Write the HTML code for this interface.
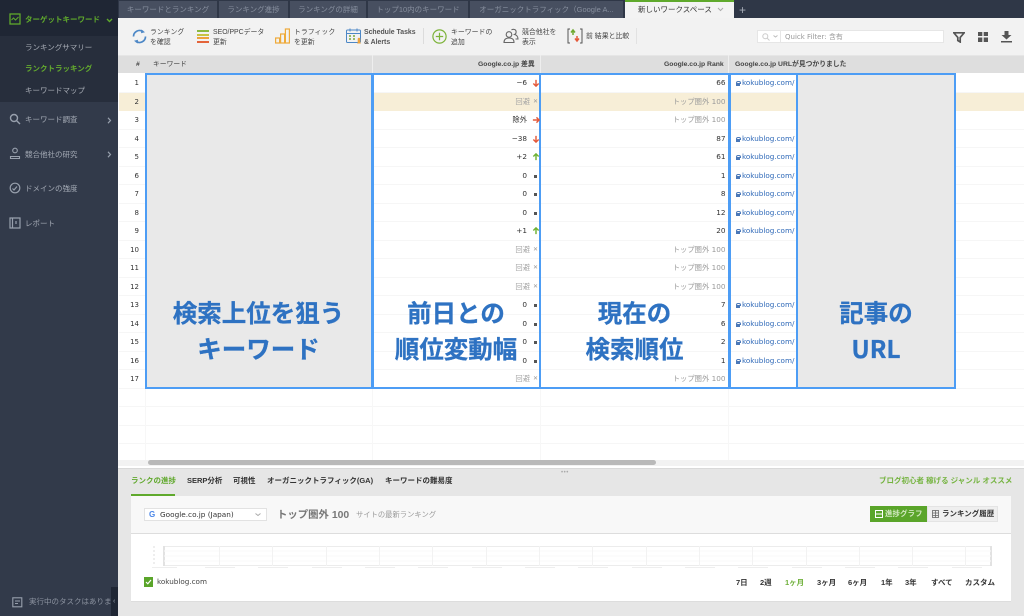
<!DOCTYPE html>
<html lang="ja"><head><meta charset="utf-8"><title>Rank Tracker</title>
<style>
*{box-sizing:border-box}
html,body{margin:0;padding:0}
body{width:1024px;height:616px;overflow:hidden;position:relative;background:#fff;font-family:"Liberation Sans","Noto Sans CJK JP",sans-serif;font-size:7.5px;color:#333}
.a{position:absolute}
.t{position:absolute;white-space:nowrap;line-height:10px}
.tab{position:absolute;top:1px;height:17px;background:#474f60;color:#878f9e;font-size:7.5px;line-height:18px;text-align:center;white-space:nowrap;overflow:hidden}
.nav{position:absolute;left:25px;font-size:7.5px;line-height:10px;color:#a3a9b4;white-space:nowrap}
.tb{position:absolute;font-size:6.9px;line-height:9.5px;color:#444;white-space:nowrap}
.h{position:absolute;top:60px;font-size:6.8px;line-height:10px;font-weight:bold;color:#444;white-space:nowrap}
.row{position:absolute;left:119px;width:905px;height:18.5px;border-bottom:1px solid #f6f6f6}
.n{position:absolute;left:119px;width:20px;text-align:right;font-family:"DejaVu Sans","Noto Sans CJK JP",sans-serif;font-size:7px;line-height:10px;color:#333}
.d{position:absolute;width:145px;text-align:right;font-family:"DejaVu Sans","Noto Sans CJK JP",sans-serif;font-size:7.3px;line-height:10px;color:#333;white-space:nowrap}
.g2{left:385px !important;color:#a5a5a5}
.m{position:absolute;left:520px;width:205.5px;text-align:right;font-family:"DejaVu Sans","Noto Sans CJK JP",sans-serif;font-size:7.3px;line-height:10px;color:#333;white-space:nowrap}
.g{color:#9a9a9a}
.x{position:absolute;left:533px;font-size:6px;line-height:10px;color:#9a9a9a}
.ar{position:absolute;left:531.5px;width:8px;height:8px;margin-top:1px}
.u{position:absolute;left:735px;padding-left:7px;font-family:"DejaVu Sans",sans-serif;font-size:7.2px;line-height:10px;color:#2f69b8;white-space:nowrap}
.u::before{content:"";position:absolute;left:.5px;top:4.500px;width:4px;height:3px;background:#4a78b8}
.u::after{content:"";position:absolute;left:1.300px;top:2.500px;width:2.400px;height:2.500px;border:.8px solid #4a78b8;border-bottom:0;border-radius:2px 2px 0 0}
.box{position:absolute;top:73px;height:316px;border:2px solid #4d9df5}
.big{position:absolute;font-size:24.5px;line-height:30px;font-weight:bold;color:#2e72c2;text-align:center;white-space:nowrap;font-family:"Noto Sans CJK JP",sans-serif;-webkit-text-stroke:.3px #2e72c2}
.bt{position:absolute;top:476px;font-size:7.5px;line-height:10px;font-weight:bold;color:#333;white-space:nowrap}
.per{position:absolute;top:578px;font-size:7.5px;line-height:10px;font-weight:bold;color:#333;white-space:nowrap}
</style></head><body>

<!-- sidebar -->
<div class="a" style="left:0;top:0;width:118px;height:616px;background:#323a4a"></div>
<div class="a" style="left:0;top:0;width:118px;height:36px;background:#1f2634"></div>
<div class="a" style="left:0;top:36px;width:118px;height:66px;background:#272e3c"></div>
<svg class="a" style="left:9px;top:13px" width="12" height="12" viewBox="0 0 12 12" fill="none" stroke="#5fa92c"><rect x="1" y="1" width="10" height="10" stroke-width="1.3"/><path d="M2.5 7l2-2 2 2 3-3" stroke-width="1"/></svg>
<div class="t" style="left:25px;top:15px;font-size:7.5px;font-weight:bold;color:#5fa92c">ターゲットキーワード</div>
<svg class="a" style="left:106px;top:18px" width="7" height="5" viewBox="0 0 7 5" fill="none" stroke="#5fa92c" stroke-width="1.4"><path d="M1 1l2.500 2.500L6 1"/></svg>
<div class="nav" style="top:43px;color:#a8adb6">ランキングサマリー</div>
<div class="nav" style="top:64px;color:#63aa2e;font-weight:bold">ランクトラッキング</div>
<div class="nav" style="top:86px;color:#a8adb6">キーワードマップ</div>
<svg class="a" style="left:9px;top:113px" width="12" height="12" viewBox="0 0 12 12" fill="none" stroke="#98a0ad" stroke-width="1.4"><circle cx="5" cy="5" r="3.500"/><path d="M7.700 7.700L11 11"/></svg>
<div class="nav" style="top:115px">キーワード調査</div>
<svg class="a" style="left:107px;top:117px" width="5" height="7" viewBox="0 0 5 7" fill="none" stroke="#98a0ad" stroke-width="1.200"><path d="M1 .8l2.500 2.700L1 6.200"/></svg>
<svg class="a" style="left:9px;top:147px" width="12" height="13" viewBox="0 0 12 13" fill="none" stroke="#98a0ad" stroke-width="1.100"><circle cx="6" cy="3.500" r="2.300"/><path d="M1.500 11.500V9.500h9v2z"/></svg>
<div class="nav" style="top:150px">競合他社の研究</div>
<svg class="a" style="left:107px;top:151px" width="5" height="7" viewBox="0 0 5 7" fill="none" stroke="#98a0ad" stroke-width="1.200"><path d="M1 .8l2.500 2.700L1 6.200"/></svg>
<svg class="a" style="left:9px;top:182px" width="12" height="12" viewBox="0 0 12 12" fill="none" stroke="#98a0ad" stroke-width="1.200"><circle cx="6" cy="6" r="4.800"/><path d="M3.500 6.500L5 8l3-3.500"/></svg>
<div class="nav" style="top:184px">ドメインの強度</div>
<svg class="a" style="left:9px;top:217px" width="12" height="12" viewBox="0 0 12 12" fill="none" stroke="#98a0ad" stroke-width="1.200"><path d="M1 1h2.500v10H1zM3.500 1H11v10H3.500z"/><path d="M7 4v3"/></svg>
<div class="nav" style="top:219px">レポート</div>
<svg class="a" style="left:12px;top:597px" width="11" height="11" viewBox="0 0 11 11" fill="none" stroke="#98a0ad" stroke-width="1.100"><rect x=".8" y=".8" width="9" height="9"/><path d="M3 4h5M3 6.500h3"/></svg>
<div class="t" style="left:29px;top:597px;width:82px;overflow:hidden;font-size:7.500px;color:#8d94a1">実行中のタスクはありません</div>
<div class="a" style="left:111px;top:587px;width:7px;height:29px;background:#1f2634"></div>
<div class="t" style="left:113px;top:597px;font-size:7px;color:#98a0ad">‹</div>

<!-- tabs -->
<div class="a" style="left:118px;top:0;width:906px;height:18px;background:#2f3747"></div>
<div class="tab" style="left:119px;width:98px">キーワードとランキング</div>
<div class="tab" style="left:219px;width:69px">ランキング進捗</div>
<div class="tab" style="left:290px;width:76px">ランキングの詳細</div>
<div class="tab" style="left:368px;width:100px">トップ10内のキーワード</div>
<div class="tab" style="left:470px;width:153px">オーガニックトラフィック（Google A...</div>
<div class="a" style="left:625px;top:0;width:109px;height:18px;background:#f3f3f3;border-top:2px solid #5fa92c"></div>
<div class="t" style="left:638px;top:5px;font-size:7.500px;color:#333">新しいワークスペース</div>
<svg class="a" style="left:717px;top:7px" width="7" height="5" viewBox="0 0 7 5" fill="none" stroke="#aaa"><path d="M1 1l2.500 2.500L6 1"/></svg>
<div class="t" style="left:739px;top:5px;font-size:12px;color:#a5abb6">+</div>

<!-- toolbar -->
<div class="a" style="left:118px;top:18px;width:906px;height:37px;background:#f2f2f2"></div>
<svg class="a" style="left:132px;top:29px" width="15" height="15" viewBox="0 0 15 15" fill="none" stroke="#4c87c6" stroke-width="1.700"><path d="M1.500 7.500A6 6 0 0 1 10.800 2.500"/><path d="M13.500 7.500A6 6 0 0 1 4.200 12.500"/><path d="M9.500 .5l3.500 2.800-4 1z" fill="#4c87c6" stroke="none"/><path d="M5.500 14.500L2 11.700l4-1z" fill="#4c87c6" stroke="none"/></svg>
<div class="tb" style="left:150px;top:28px">ランキング<br>を確認</div>
<div class="a" style="left:197px;top:30px;width:12px;height:2px;background:#8ab83f"></div>
<div class="a" style="left:197px;top:33.500px;width:12px;height:2px;background:#c6c342"></div>
<div class="a" style="left:197px;top:37px;width:12px;height:2px;background:#eda23c"></div>
<div class="a" style="left:197px;top:40.500px;width:12px;height:2px;background:#e4643a"></div>
<div class="tb" style="left:213px;top:28px">SEO/PPCデータ<br>更新</div>
<svg class="a" style="left:275px;top:28px" width="15" height="16" viewBox="0 0 15 16" fill="none" stroke="#eeaa3a" stroke-width="1.200"><rect x=".6" y="10" width="4" height="5"/><rect x="5.600" y="6" width="4" height="9"/><rect x="10.400" y="1" width="4" height="14"/></svg>
<div class="tb" style="left:294px;top:28px">トラフィック<br>を更新</div>
<svg class="a" style="left:346px;top:28px" width="16" height="16" viewBox="0 0 16 16" fill="none" stroke="#4c87c6" stroke-width="1"><rect x=".5" y="2" width="14" height="12.500" rx="1"/><path d="M.5 5.500h14M4 .5v3M11 .5v3"/><path d="M3 8h2M7 8h2M3 11h2M7 11h2" stroke="#79a83c" stroke-width="1.500"/><path d="M11 15.500h4l-.7-1V11a1.300 1.300 0 0 0-2.600 0v3.500z" fill="#eda23c" stroke="none"/></svg>
<div class="tb" style="left:364px;top:28px;font-weight:bold;color:#555">Schedule Tasks<br>&amp; Alerts</div>
<div class="a" style="left:423px;top:28px;width:1px;height:16px;background:#dcdcdc"></div>
<svg class="a" style="left:432px;top:29px" width="15" height="15" viewBox="0 0 15 15" fill="none" stroke="#7db33a" stroke-width="1.200"><circle cx="7.500" cy="7.500" r="6.600"/><path d="M7.500 3.800v7.400M3.800 7.500h7.400"/></svg>
<div class="tb" style="left:451px;top:28px">キーワードの<br>追加</div>
<svg class="a" style="left:503px;top:28px" width="16" height="16" viewBox="0 0 16 16" fill="none" stroke="#666" stroke-width="1.100"><circle cx="6" cy="6.500" r="2.800"/><path d="M1 14.500c0-3.500 2-4.500 5-4.500s5 1 5 4.500z"/><path d="M8.500 2c1-1 4-1 4.500 1s-.5 3-1.500 3.500c2 .5 3.500 2 3.500 4.500h-2.500"/></svg>
<div class="tb" style="left:522px;top:28px">競合他社を<br>表示</div>
<svg class="a" style="left:567px;top:28px" width="16" height="16" viewBox="0 0 16 16" fill="none"><path d="M3 1H1v14h2M13 1h2v14h-2" stroke="#555" stroke-width="1"/><path d="M6 7V3M4 4.500L6 2l2 2.500" stroke="#6fa932" stroke-width="1.500"/><path d="M10 8v4.500M8 10.500l2 2.500 2-2.500" stroke="#e4593a" stroke-width="1.500"/></svg>
<div class="tb" style="left:586px;top:32px">前 結果と比較</div>
<div class="a" style="left:636px;top:28px;width:1px;height:16px;background:#e2e2e2"></div>
<div class="a" style="left:757px;top:30px;width:187px;height:13px;background:#fff;border:1px solid #e6e6e6"></div>
<svg class="a" style="left:762px;top:33px" width="8" height="8" viewBox="0 0 8 8" fill="none" stroke="#ccc"><circle cx="3.300" cy="3.300" r="2.500"/><path d="M5 5l2.500 2.500"/></svg>
<svg class="a" style="left:773px;top:35px" width="5" height="3" viewBox="0 0 5 3" fill="none" stroke="#bbb"><path d="M.5.500l2 1.500 2-1.500"/></svg>
<div class="a" style="left:780px;top:30px;width:1px;height:13px;background:#e6e6e6"></div>
<div class="t" style="left:785px;top:32px;font-family:'DejaVu Sans','Noto Sans CJK JP',sans-serif;font-size:7px;color:#999">Quick Filter: 含有</div>
<svg class="a" style="left:953px;top:32px" width="12" height="11" viewBox="0 0 12 11"><path d="M.8.800h10.400L7.200 5.500V10L4.800 8.500V5.500z" fill="none" stroke="#555" stroke-width="1.700"/></svg>
<svg class="a" style="left:978px;top:32px" width="10" height="10" viewBox="0 0 10 10" fill="#555"><rect width="4.300" height="4"/><rect x="5.700" width="4.300" height="4"/><rect y="5.500" width="4.300" height="4.500"/><rect x="5.700" y="5.500" width="4.300" height="4.500"/></svg>
<svg class="a" style="left:1001px;top:31px" width="11" height="12" viewBox="0 0 11 12" fill="#555"><path d="M3.500 0h4v4h3L5.500 8.500.500 4h3z"/><rect y="10" width="11" height="1.500"/></svg>

<!-- table -->
<div class="a" style="left:118px;top:55px;width:906px;height:18px;background:#dedede;border-top:1px solid #e6e6e6"></div>
<div class="a" style="left:372px;top:55px;width:1px;height:18px;background:#eee"></div>
<div class="a" style="left:540px;top:55px;width:1px;height:18px;background:#eee"></div>
<div class="a" style="left:728px;top:55px;width:1px;height:18px;background:#eee"></div>
<div class="h" style="left:136px">#</div>
<div class="h" style="left:153px;font-weight:normal">キーワード</div>
<div class="h" style="left:478px">Google.co.jp 差異</div>
<div class="h" style="left:664px">Google.co.jp Rank</div>
<div class="h" style="left:735px">Google.co.jp URLが見つかりました</div>

<div class="row" style="top:74px"></div>
<div class="row" style="top:92.500px;background:#f7eed7;border:0"></div>
<div class="row" style="top:111px"></div>
<div class="row" style="top:129.500px"></div>
<div class="row" style="top:148px"></div>
<div class="row" style="top:166.500px"></div>
<div class="row" style="top:185px"></div>
<div class="row" style="top:203.500px"></div>
<div class="row" style="top:222px"></div>
<div class="row" style="top:240.500px"></div>
<div class="row" style="top:259px"></div>
<div class="row" style="top:277.500px"></div>
<div class="row" style="top:296px"></div>
<div class="row" style="top:314.500px"></div>
<div class="row" style="top:333px"></div>
<div class="row" style="top:351.500px"></div>
<div class="row" style="top:370px"></div>
<div class="row" style="top:388.500px"></div>
<div class="row" style="top:407px"></div>
<div class="row" style="top:425.500px"></div>
<div class="row" style="top:444px;border:0"></div>
<div class="a" style="left:145px;top:389px;width:1px;height:71px;background:#f7f7f7"></div>
<div class="a" style="left:372px;top:389px;width:1px;height:71px;background:#f7f7f7"></div>
<div class="a" style="left:540px;top:389px;width:1px;height:71px;background:#f7f7f7"></div>
<div class="a" style="left:728px;top:389px;width:1px;height:71px;background:#f7f7f7"></div>

<div class="n" style="top:78px">1</div><div class="n" style="top:97px">2</div><div class="n" style="top:115px">3</div><div class="n" style="top:134px">4</div><div class="n" style="top:152px">5</div><div class="n" style="top:171px">6</div><div class="n" style="top:189px">7</div><div class="n" style="top:208px">8</div><div class="n" style="top:226px">9</div><div class="n" style="top:245px">10</div><div class="n" style="top:263px">11</div><div class="n" style="top:282px">12</div><div class="n" style="top:300px">13</div><div class="n" style="top:319px">14</div><div class="n" style="top:337px">15</div><div class="n" style="top:356px">16</div><div class="n" style="top:374px">17</div>

<!-- boxes -->
<div class="box" style="left:145px;width:228px;background:#e9e9e9"></div>
<div class="box" style="left:372px;width:169px"></div>
<div class="box" style="left:539px;width:191px"></div>
<div class="box" style="left:729px;width:69px"></div>
<div class="box" style="left:796px;width:160px;background:#e9e9e9"></div>

<!-- diff -->
<div class="d" style="top:78px;left:382px">−6</div>
<svg class="ar" style="top:78px" viewBox="0 0 9 9" fill="none" stroke="#e4593a" stroke-width="1.600"><path d="M4.500 1v7M1.500 5l3 3 3-3"/></svg>
<div class="d g2" style="top:97px">回避</div><div class="x" style="top:97px">✕</div>
<div class="d" style="top:115px;left:382px">除外</div>
<svg class="ar" style="top:115px" viewBox="0 0 9 9" fill="none" stroke="#e4593a" stroke-width="1.600"><path d="M1 4.500h7M5 1.500l3 3-3 3"/></svg>
<div class="d" style="top:134px;left:382px">−38</div>
<svg class="ar" style="top:134px" viewBox="0 0 9 9" fill="none" stroke="#e4593a" stroke-width="1.600"><path d="M4.500 1v7M1.500 5l3 3 3-3"/></svg>
<div class="d" style="top:152px;left:382px">+2</div>
<svg class="ar" style="top:152px" viewBox="0 0 9 9" fill="none" stroke="#6fb132" stroke-width="1.600"><path d="M4.500 8V1M1.500 4l3-3 3 3"/></svg>
<div class="d" style="top:171px;left:382px">0</div><div class="a" style="left:534px;top:174.500px;width:3px;height:3px;background:#555"></div>
<div class="d" style="top:189px;left:382px">0</div><div class="a" style="left:534px;top:192.500px;width:3px;height:3px;background:#555"></div>
<div class="d" style="top:208px;left:382px">0</div><div class="a" style="left:534px;top:211.500px;width:3px;height:3px;background:#555"></div>
<div class="d" style="top:226px;left:382px">+1</div>
<svg class="ar" style="top:226px" viewBox="0 0 9 9" fill="none" stroke="#6fb132" stroke-width="1.600"><path d="M4.500 8V1M1.500 4l3-3 3 3"/></svg>
<div class="d g2" style="top:245px">回避</div><div class="x" style="top:245px">✕</div>
<div class="d g2" style="top:263px">回避</div><div class="x" style="top:263px">✕</div>
<div class="d g2" style="top:282px">回避</div><div class="x" style="top:282px">✕</div>
<div class="d" style="top:300px;left:382px">0</div><div class="a" style="left:534px;top:303.500px;width:3px;height:3px;background:#555"></div>
<div class="d" style="top:319px;left:382px">0</div><div class="a" style="left:534px;top:322.500px;width:3px;height:3px;background:#555"></div>
<div class="d" style="top:337px;left:382px">0</div><div class="a" style="left:534px;top:340.500px;width:3px;height:3px;background:#555"></div>
<div class="d" style="top:356px;left:382px">0</div><div class="a" style="left:534px;top:359.500px;width:3px;height:3px;background:#555"></div>
<div class="d g2" style="top:374px">回避</div><div class="x" style="top:374px">✕</div>

<!-- rank -->
<div class="m" style="top:78px">66</div>
<div class="m g" style="top:97px">トップ圏外 100</div>
<div class="m g" style="top:115px">トップ圏外 100</div>
<div class="m" style="top:134px">87</div>
<div class="m" style="top:152px">61</div>
<div class="m" style="top:171px">1</div>
<div class="m" style="top:189px">8</div>
<div class="m" style="top:208px">12</div>
<div class="m" style="top:226px">20</div>
<div class="m g" style="top:245px">トップ圏外 100</div>
<div class="m g" style="top:263px">トップ圏外 100</div>
<div class="m g" style="top:282px">トップ圏外 100</div>
<div class="m" style="top:300px">7</div>
<div class="m" style="top:319px">6</div>
<div class="m" style="top:337px">2</div>
<div class="m" style="top:356px">1</div>
<div class="m g" style="top:374px">トップ圏外 100</div>

<!-- url -->
<div class="u" style="top:78px">kokublog.com/</div>
<div class="u" style="top:134px">kokublog.com/</div>
<div class="u" style="top:152px">kokublog.com/</div>
<div class="u" style="top:171px">kokublog.com/</div>
<div class="u" style="top:189px">kokublog.com/</div>
<div class="u" style="top:208px">kokublog.com/</div>
<div class="u" style="top:226px">kokublog.com/</div>
<div class="u" style="top:300px">kokublog.com/</div>
<div class="u" style="top:319px">kokublog.com/</div>
<div class="u" style="top:337px">kokublog.com/</div>
<div class="u" style="top:356px">kokublog.com/</div>

<!-- annotations -->
<div class="big" style="left:145px;width:227px;top:298px">検索上位を狙う</div>
<div class="big" style="left:145px;width:227px;top:334px">キーワード</div>
<div class="big" style="left:372px;width:168px;top:298px">前日との</div>
<div class="big" style="left:372px;width:168px;top:334px">順位変動幅</div>
<div class="big" style="left:540px;width:189px;top:298px">現在の</div>
<div class="big" style="left:540px;width:189px;top:334px">検索順位</div>
<div class="big" style="left:796px;width:160px;top:298px">記事の</div>
<div class="big" style="left:796px;width:160px;top:334px">URL</div>

<!-- scrollbar -->
<div class="a" style="left:118px;top:460px;width:906px;height:6px;background:#f2f2f2"></div>
<div class="a" style="left:148px;top:460px;width:508px;height:5px;background:#b9b9b9;border-radius:3px"></div>
<div class="a" style="left:118px;top:466px;width:906px;height:2px;background:#fff"></div>

<!-- bottom panel -->
<div class="a" style="left:118px;top:468px;width:906px;height:148px;background:#e6e6e6;border-top:1px solid #d9d9d9"></div>
<div class="t" style="left:561px;top:468px;font-size:6px;color:#aaa;letter-spacing:.5px">•••</div>
<div class="bt" style="left:131px;color:#62a92f">ランクの進捗</div>
<div class="a" style="left:131px;top:494px;width:44px;height:2px;background:#5fa92c"></div>
<div class="bt" style="left:187px">SERP分析</div>
<div class="bt" style="left:233px">可視性</div>
<div class="bt" style="left:267px">オーガニックトラフィック(GA)</div>
<div class="bt" style="left:385px">キーワードの難易度</div>
<div class="bt" style="left:879px;color:#74b33f">ブログ初心者 稼げる ジャンル オススメ</div>

<div class="a" style="left:131px;top:496px;width:880px;height:38px;background:#f8f8f8;border-bottom:1px solid #ddd"></div>
<div class="a" style="left:131px;top:534px;width:880px;height:68px;background:#fff;border-bottom:1px solid #ddd"></div>

<div class="a" style="left:144px;top:508px;width:123px;height:13px;background:#fff;border:1px solid #e2e2e2"></div>
<div class="t" style="left:149px;top:510px;font-size:8px;font-weight:bold;color:#4a86e8">G</div>
<div class="t" style="left:160px;top:510px;font-family:'DejaVu Sans',sans-serif;font-size:7.300px;color:#333">Google.co.jp (Japan)</div>
<svg class="a" style="left:255px;top:513px" width="6" height="4" viewBox="0 0 6 4" fill="none" stroke="#aaa"><path d="M.5.500l2.500 2 2.500-2"/></svg>
<div class="t" style="left:277px;top:510px;font-size:10.400px;line-height:12px;font-weight:bold;color:#777">トップ圏外 100</div>
<div class="t" style="left:356px;top:510px;font-size:7.300px;color:#999">サイトの最新ランキング</div>

<div class="a" style="left:870px;top:506px;width:57px;height:16px;background:#5aa52a"></div>
<svg class="a" style="left:875px;top:510px" width="8" height="8" viewBox="0 0 8 8" fill="none" stroke="#fff"><rect x=".5" y=".5" width="7" height="7"/><path d="M.5 4h7"/></svg>
<div class="t" style="left:885px;top:509px;font-size:7.500px;font-weight:bold;color:#cfe7bd">進捗グラフ</div>
<div class="a" style="left:927px;top:506px;width:71px;height:16px;background:#efefef;border:1px solid #e4e4e4"></div>
<svg class="a" style="left:932px;top:510px" width="7" height="8" viewBox="0 0 7 8" fill="none" stroke="#666" stroke-width=".8"><rect x=".5" y=".5" width="6" height="7"/><path d="M.5 3h6M.5 5.500h6M3.500.5v7"/></svg>
<div class="t" style="left:942px;top:509px;font-size:7.500px;font-weight:bold;color:#333">ランキング履歴</div>

<!-- chart -->
<svg class="a" style="left:148px;top:542px" width="850" height="28" viewBox="0 0 850 28">
<rect x="15.500" y="4.500" width="827" height="19" fill="#fff" stroke="#ececec"/>
<rect x="15" y="4" width="2" height="20" fill="#e2e2e2"/><rect x="842" y="4" width="2" height="20" fill="#e2e2e2"/>
<path d="M16 9h827M16 14h827M16 19h827" stroke="#fafafa"/>
<path d="M71.500 4v20M124.500 4v20M178.500 4v20M231.500 4v20M284.500 4v20M338.500 4v20M391.500 4v20M444.500 4v20M498.500 4v20M551.500 4v20M604.500 4v20M658.500 4v20M711.500 4v20M764.500 4v20M817.500 4v20" stroke="#f2f2f2"/>
<path d="M5 5h2M5 9h2M5 13h2M5 17h2M5 21h2" stroke="#ddd"/>
<path d="M4 25.500h25M57 25.500h30M110 25.500h30M164 25.500h30M217 25.500h30M270 25.500h30M324 25.500h30M377 25.500h30M430 25.500h30M484 25.500h30M537 25.500h30M590 25.500h30M644 25.500h30M697 25.500h30M750 25.500h30M804 25.500h30" stroke="#eee"/>
</svg>

<div class="a" style="left:144px;top:577px;width:9px;height:10px;background:#5aa52a"></div>
<svg class="a" style="left:145px;top:579px" width="7" height="6" viewBox="0 0 7 6" fill="none" stroke="#fff" stroke-width="1.200"><path d="M1 3l1.800 1.800L6 1"/></svg>
<div class="t" style="left:157px;top:577px;font-family:'DejaVu Sans',sans-serif;font-size:7.200px;color:#444">kokublog.com</div>
<div class="per" style="left:736px">7日</div>
<div class="per" style="left:760px">2週</div>
<div class="per" style="left:785px;color:#6fb03a">1ヶ月</div>
<div class="per" style="left:817px">3ヶ月</div>
<div class="per" style="left:848px">6ヶ月</div>
<div class="per" style="left:881px">1年</div>
<div class="per" style="left:905px">3年</div>
<div class="per" style="left:931px">すべて</div>
<div class="per" style="left:965px">カスタム</div>

</body></html>
